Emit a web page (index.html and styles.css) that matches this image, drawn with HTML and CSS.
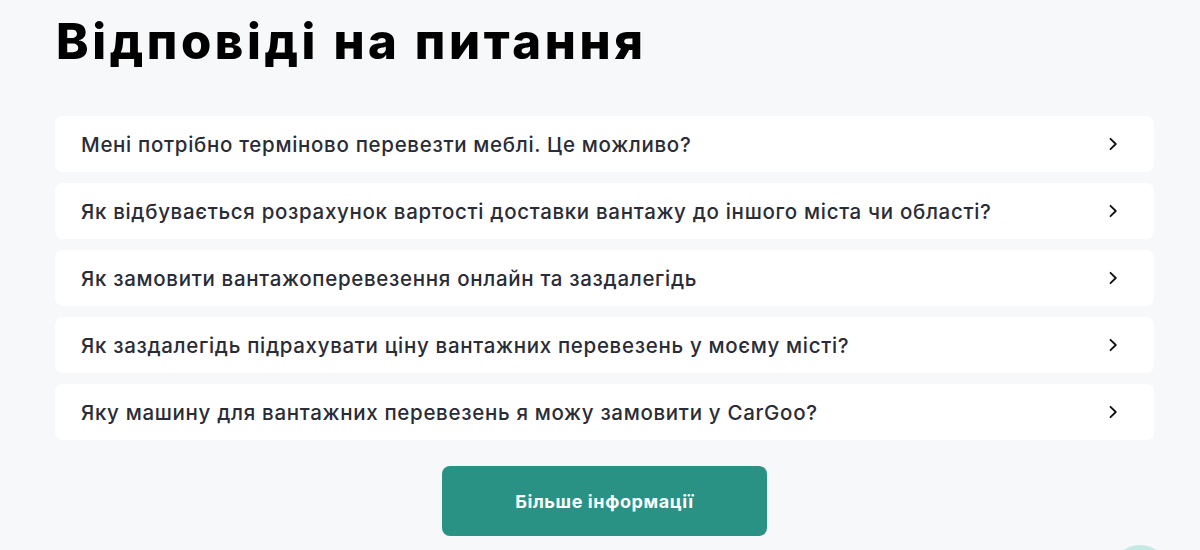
FILE: index.html
```html
<!DOCTYPE html>
<html lang="uk">
<head>
<meta charset="utf-8">
<title>Відповіді на питання</title>
<link rel="stylesheet" href="styles.css">
</head>
<body>
<section class="faq">
  <h1 class="faq-title">Відповіді на питання</h1>
  <ul class="faq-list">
    <li class="faq-item"><span class="faq-q">Мені потрібно терміново перевезти меблі. Це можливо?</span><svg class="chev" viewBox="0 0 10 14" width="10" height="14"><path d="M2.5 1.8 L7.8 7 L2.5 12.2" fill="none" stroke="#111" stroke-width="1.8" stroke-linecap="round" stroke-linejoin="round"/></svg></li>
    <li class="faq-item"><span class="faq-q">Як відбувається розрахунок вартості доставки вантажу до іншого міста чи області?</span><svg class="chev" viewBox="0 0 10 14" width="10" height="14"><path d="M2.5 1.8 L7.8 7 L2.5 12.2" fill="none" stroke="#111" stroke-width="1.8" stroke-linecap="round" stroke-linejoin="round"/></svg></li>
    <li class="faq-item"><span class="faq-q">Як замовити вантажоперевезення онлайн та заздалегідь</span><svg class="chev" viewBox="0 0 10 14" width="10" height="14"><path d="M2.5 1.8 L7.8 7 L2.5 12.2" fill="none" stroke="#111" stroke-width="1.8" stroke-linecap="round" stroke-linejoin="round"/></svg></li>
    <li class="faq-item"><span class="faq-q">Як заздалегідь підрахувати ціну вантажних перевезень у моєму місті?</span><svg class="chev" viewBox="0 0 10 14" width="10" height="14"><path d="M2.5 1.8 L7.8 7 L2.5 12.2" fill="none" stroke="#111" stroke-width="1.8" stroke-linecap="round" stroke-linejoin="round"/></svg></li>
    <li class="faq-item"><span class="faq-q">Яку машину для вантажних перевезень я можу замовити у CarGoo?</span><svg class="chev" viewBox="0 0 10 14" width="10" height="14"><path d="M2.5 1.8 L7.8 7 L2.5 12.2" fill="none" stroke="#111" stroke-width="1.8" stroke-linecap="round" stroke-linejoin="round"/></svg></li>
  </ul>
  <div class="faq-actions">
    <a class="more-btn" href="#">Більше інформації</a>
  </div>
</section>
<div class="chat-bubble"></div>
</body>
</html>
```
FILE: styles.css
```css
html, body {
  margin: 0;
  padding: 0;
  background: #f7f8fa;
  overflow: hidden;
}
body {
  font-family: Inter, "Noto Sans", "DejaVu Sans", sans-serif;
  color: #2a2c36;
}
.faq {
  width: 1099px;
  margin-left: 55px;
  padding-top: 14px;
}
.faq-title {
  margin: 0 0 0 1px;
  font-size: 49px;
  line-height: 56px;
  font-weight: 800;
  color: #000;
  letter-spacing: 3.6px;
}
.faq-list {
  list-style: none;
  margin: 46px 0 0 0;
  padding: 0;
  display: flex;
  flex-direction: column;
  gap: 11px;
}
.faq-item {
  height: 56px;
  background: #fff;
  border-radius: 8px;
  display: flex;
  align-items: center;
  justify-content: space-between;
  padding: 0 36px 0 26px;
}
.faq-q {
  font-size: 20.5px;
  font-weight: 500;
  color: #2a2c36;
  letter-spacing: 0.68px;
}
.chev {
  display: block;
}
.faq-actions {
  display: flex;
  justify-content: center;
  margin-top: 26px;
}
.more-btn {
  width: 325px;
  height: 70px;
  border-radius: 8px;
  background: #2a9285;
  color: #fff;
  font-size: 18px;
  font-weight: 700;
  letter-spacing: 0.6px;
  text-decoration: none;
  display: flex;
  align-items: center;
  justify-content: center;
}
.chat-bubble {
  position: fixed;
  left: 1110px;
  top: 545px;
  width: 60px;
  height: 60px;
  border-radius: 50%;
  background: #c6e9e6;
}
```
